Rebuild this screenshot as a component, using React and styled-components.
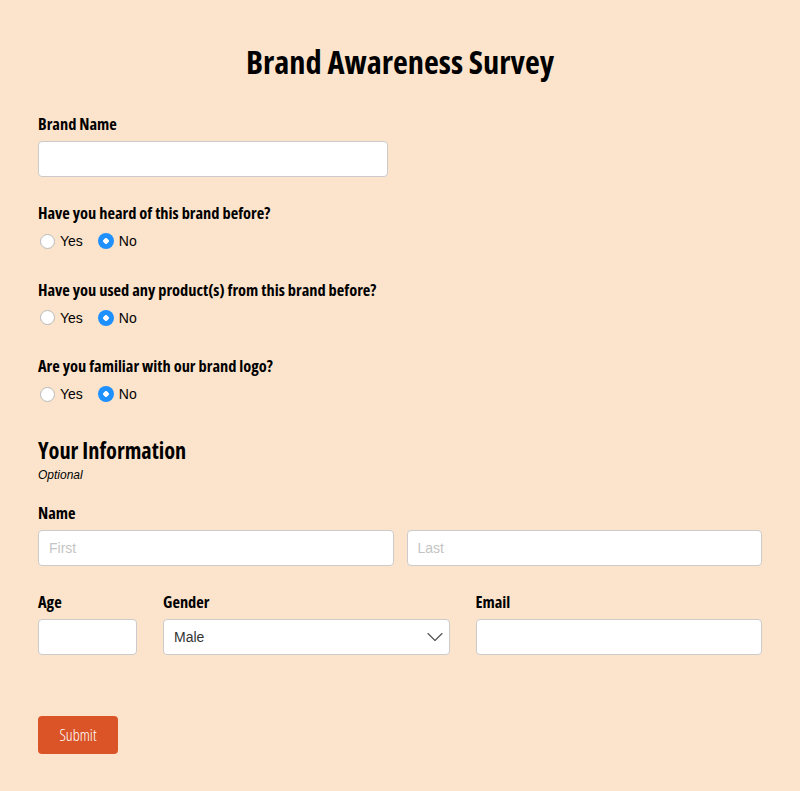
import React from 'react';
import styled, { createGlobalStyle } from 'styled-components';
import { ChevronDown } from 'lucide-react';

const GlobalStyle = createGlobalStyle`
  body {
    margin:           0;
    background:       #fce4cc;
    font-family:      "Open Sans", "Liberation Sans", sans-serif;
  }
`

const Page = styled.form`
  width:            724px;
  margin:           0 auto;
  padding:          40px 0 37px;
`
const Title = styled.h1`
  margin:           0 0 31px;
  text-align:       center;
  font-size:        32.4px;
  font-weight:      700;
  font-stretch:     75%;
  line-height:      42px;
  color:            #000;
`
const Field = styled.div`
  margin-bottom:    ${props => props.$mb || 0}px;
`
const Label = styled.label`
  display:          block;
  font-size:        16.4px;
  font-weight:      700;
  font-stretch:     75%;
  line-height:      22px;
  margin-bottom:    6px;
  color:            #000;
`
const Input = styled.input`
  box-sizing:       border-box;
  width:            ${props => props.$width || '100%'};
  height:           36px;
  border:           1px solid #cbcbcb;
  border-radius:    4px;
  background:       #fff;
  padding:          0 10px;
  font-family:      "Liberation Sans", Arial, sans-serif;
  font-size:        14px;
  color:            #333;
  outline:          none;
  &::placeholder {
    color:          #c4c4c4;
  }
`
const RadioRow = styled.div`
  display:          flex;
  align-items:      center;
  gap:              13px;
  padding-top:      2px;
`
const RadioLabel = styled.label`
  display:          flex;
  align-items:      center;
  gap:              5px;
  font-family:      "Liberation Sans", Arial, sans-serif;
  font-size:        14px;
  line-height:      18px;
  color:            #000;
`
const Radio = styled.input`
  appearance:       none;
  box-sizing:       border-box;
  margin:           0 0 0 2px;
  width:            15px;
  height:           15px;
  border:           1px solid #b9b9b9;
  border-radius:    50%;
  background:       #fff;
  &:checked {
    width:          16px;
    height:         16px;
    border:         none;
    background:     radial-gradient(circle, #fff 0 2.5px, #1e90ff 3px);
  }
`
const SectionTitle = styled.h2`
  margin:           0;
  padding-top:      5px;
  font-size:        22.3px;
  font-weight:      700;
  font-stretch:     75%;
  line-height:      28px;
  color:            #000;
`
const Note = styled.div`
  font-family:      "Liberation Sans", Arial, sans-serif;
  font-style:       italic;
  font-size:        12px;
  line-height:      16px;
  margin:           2px 0 19px;
`
const NameRow = styled.div`
  display:          grid;
  grid-template-columns: 1fr 1fr;
  gap:              13px;
`
const DetailRow = styled.div`
  display:          grid;
  grid-template-columns: 99px 1fr 1fr;
  gap:              26px;
  margin-bottom:    61px;
`
const SelectWrap = styled.div`
  position:         relative;
  svg {
    position:       absolute;
    right:          1px;
    top:            4px;
    color:          #555;
    pointer-events: none;
  }
`
const Select = styled.select`
  box-sizing:       border-box;
  width:            100%;
  height:           36px;
  appearance:       none;
  border:           1px solid #cbcbcb;
  border-radius:    4px;
  background:       #fff;
  padding:          0 10px;
  font-family:      "Liberation Sans", Arial, sans-serif;
  font-size:        14px;
  color:            #333;
  outline:          none;
`
const SubmitButton = styled.button`
  width:            80px;
  height:           38px;
  border:           none;
  border-radius:    4px;
  background:       #da5427;
  color:            #fff;
  font-family:      "Open Sans", sans-serif;
  font-size:        16px;
  font-weight:      300;
  font-stretch:     75%;
  cursor:           pointer;
`

const questions = [
  { name: 'heard', text: 'Have you heard of this brand before?' },
  { name: 'used', text: 'Have you used any product(s) from this brand before?' },
  { name: 'logo', text: 'Are you familiar with our brand logo?' }
]

function App() {
  return (
    <>
      <GlobalStyle />
      <Page onSubmit={e => e.preventDefault()}>
        <Title>Brand Awareness Survey</Title>
        <Field $mb={25}>
          <Label>Brand Name</Label>
          <Input $width="350px" type="text" />
        </Field>
        {questions.map(q => (
          <Field key={q.name} $mb={28.5}>
            <Label>{q.text}</Label>
            <RadioRow>
              <RadioLabel><Radio type="radio" name={q.name} value="yes" />Yes</RadioLabel>
              <RadioLabel><Radio type="radio" name={q.name} value="no" defaultChecked />No</RadioLabel>
            </RadioRow>
          </Field>
        ))}
        <SectionTitle>Your Information</SectionTitle>
        <Note>Optional</Note>
        <Field $mb={25}>
          <Label>Name</Label>
          <NameRow>
            <Input placeholder="First" />
            <Input placeholder="Last" />
          </NameRow>
        </Field>
        <DetailRow>
          <Field>
            <Label>Age</Label>
            <Input type="text" />
          </Field>
          <Field>
            <Label>Gender</Label>
            <SelectWrap>
              <Select defaultValue="Male">
                <option>Male</option>
                <option>Female</option>
                <option>Other</option>
              </Select>
              <ChevronDown size={28} strokeWidth={1} />
            </SelectWrap>
          </Field>
          <Field>
            <Label>Email</Label>
            <Input type="email" />
          </Field>
        </DetailRow>
        <SubmitButton type="submit">Submit</SubmitButton>
      </Page>
    </>
  );
}

export default App;
